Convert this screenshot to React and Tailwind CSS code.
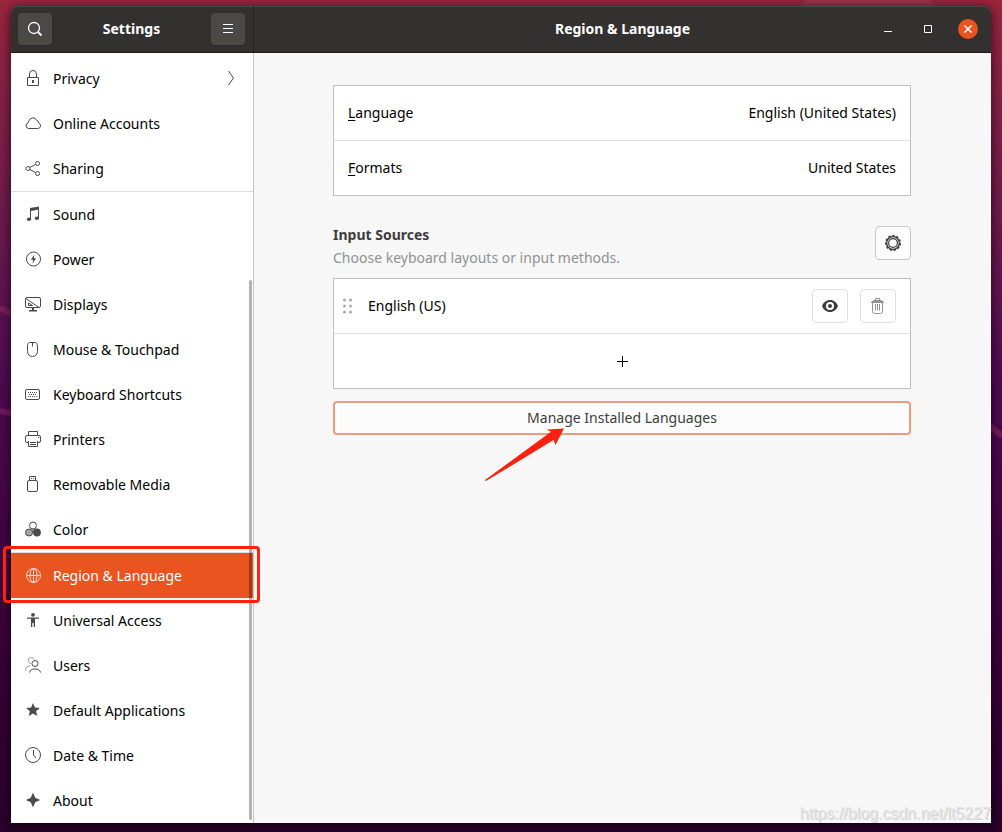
import React, { useState } from 'react';

const Icon = ({ children, size = 16, className = '' }) => (
    <svg
        width={size}
        height={size}
        viewBox={`0 0 ${size} ${size}`}
        fill="none"
        stroke="currentColor"
        strokeWidth="1"
        aria-hidden="true"
        className={`shrink-0 ${className}`}
    >
        {children}
    </svg>
);

const icons = {
    privacy: (
        <>
            <path d="M2.5 7.5h11v8h-11z" />
            <path d="M4.5 7.5V4a3.5 3.5 0 0 1 7 0v3.500" />
            <path d="M7 10h2v3H7z" fill="currentColor" stroke="none" />
        </>
    ),
    cloud: <path d="M3.600 13.500h9.200a2.800 2.800 0 0 0 1-5.400 3 3 0 0 0-2-2.700A4.200 4.200 0 0 0 3.900 6a2.500 2.500 0 0 0-.8 2 2.800 2.800 0 0 0 .5 5.500z" />,
    sharing: (
        <>
            <circle cx="3" cy="8.500" r="2" />
            <circle cx="12.500" cy="3.500" r="2" />
            <circle cx="12.500" cy="13.500" r="2" />
            <path d="M4.800 7.500l5.900-3.100M4.800 9.500l5.900 3.100" />
        </>
    ),
    sound: (
        <>
            <path d="M5 2l9-1.500v3L6 5v8H5zM13 3h1v9h-1z" fill="currentColor" stroke="none" />
            <ellipse cx="4" cy="13.300" rx="2.100" ry="1.800" fill="currentColor" stroke="none" />
            <ellipse cx="11.900" cy="12.200" rx="2.100" ry="1.800" fill="currentColor" stroke="none" />
        </>
    ),
    power: (
        <>
            <circle cx="8.500" cy="8" r="7" />
            <path d="M9.300 3.500L5.900 8.800h2.300l-.7 4 3.600-5.500H8.900z" fill="currentColor" stroke="none" />
        </>
    ),
    displays: (
        <>
            <rect x="0.500" y="1.500" width="15" height="10" rx="1.500" />
            <path d="M1 2.500l13 9M3.500 7v2.500h4z" />
            <path d="M7 12h2v2h3v1.500H4V14h3z" fill="currentColor" stroke="none" />
        </>
    ),
    mouse: (
        <>
            <path d="M2.500 6C2.500 2.500 3.500 1.500 5 1.500h5c1.500 0 2.500 1 2.500 4.500v4.500a5 5 0 0 1-10 0z" />
            <path d="M7.500 1.500v4" />
        </>
    ),
    keyboard: (
        <>
            <rect x="0.500" y="3.500" width="14" height="10" rx="1.500" />
            <path d="M3 6.500h10M4 8.500h8M3 10.500h1M5 10.500h5.500M11.500 10.500h1.500" strokeDasharray="1 1" />
        </>
    ),
    printers: (
        <>
            <path d="M3.500 4V.5h9V4M3 11.500H2A1.500 1.500 0 0 1 .5 10V6A1.500 1.500 0 0 1 2 4.500h12A1.500 1.500 0 0 1 15.500 6v4a1.500 1.500 0 0 1-1.500 1.500h-1" />
            <path d="M3.500 10v5.500h9V10M5 11.500h6M5 13.500h6M13 6.500h1" />
        </>
    ),
    media: (
        <>
            <path d="M4.500 4V.5h6V4M6 2.500h1M8 2.500h1" />
            <rect x="2.500" y="4.500" width="10" height="11" rx="1.500" />
        </>
    ),
    color: (
        <>
            <circle cx="4" cy="11.500" r="3.500" fill="#a6a6a6" />
            <circle cx="8" cy="4.500" r="3.500" fill="#fff" />
            <circle cx="12" cy="11.500" r="3.900" fill="currentColor" stroke="none" />
            <path d="M8 8v4" />
        </>
    ),
    region: (
        <>
            <circle cx="8.500" cy="8.500" r="7" />
            <ellipse cx="8.500" cy="8.500" rx="3.500" ry="7" />
            <path d="M1.500 8.500h14M8.500 1.500v14" />
        </>
    ),
    access: (
        <>
            <circle cx="8" cy="2.800" r="1.900" fill="currentColor" stroke="none" />
            <path d="M2 5.500h12v1.300h-4V15H8.700v-4H7.300v4H6V6.800H2z" fill="currentColor" stroke="none" />
        </>
    ),
    users: (
        <>
            <g opacity="0.500">
                <path d="M6 6.500A3 3 0 1 1 9 2.500M.5 13.500c0-3 1.500-4.500 4.500-4.500" />
            </g>
            <circle cx="10" cy="6.500" r="3" />
            <path d="M4.500 15.500c.5-2.500 2-3.500 5.500-3.500s5 1 5.500 3.500" />
        </>
    ),
    star: <path d="M8 1l1.900 4.600 5 .4-3.800 3.200 1.200 4.900L8 11.500l-4.300 2.600 1.200-4.900L1.100 6l5-.4z" fill="currentColor" stroke="none" />,
    clock: (
        <>
            <circle cx="8" cy="8" r="7.500" />
            <path d="M8.500 3v5l2.500 3" />
        </>
    ),
    about: <path d="M8 .8L10.300 5.700 15.200 8 10.300 10.300 8 15.200 5.700 10.300.8 8 5.700 5.700z" fill="currentColor" stroke="none" />
};

const panels = [
    { id: 'privacy', label: 'Privacy', hasSubmenu: true },
    { id: 'cloud', label: 'Online Accounts' },
    { id: 'sharing', label: 'Sharing', divider: true },
    { id: 'sound', label: 'Sound' },
    { id: 'power', label: 'Power' },
    { id: 'displays', label: 'Displays' },
    { id: 'mouse', label: 'Mouse & Touchpad' },
    { id: 'keyboard', label: 'Keyboard Shortcuts' },
    { id: 'printers', label: 'Printers' },
    { id: 'media', label: 'Removable Media' },
    { id: 'color', label: 'Color', divider: true },
    { id: 'region', label: 'Region & Language' },
    { id: 'access', label: 'Universal Access' },
    { id: 'users', label: 'Users' },
    { id: 'star', label: 'Default Applications' },
    { id: 'clock', label: 'Date & Time' },
    { id: 'about', label: 'About' }
];

const Wallpaper = () => (
    <svg
        className="absolute inset-0 h-full w-full"
        viewBox="0 0 1002 832"
        preserveAspectRatio="none"
        fill="none"
        aria-hidden="true"
    >
        <circle cx="868" cy="60" r="86" fill="#fff" opacity="0.05" />
        <path d="M0 308l12 6M0 411l12 2M990 426l12 10" stroke="#9c2a68" strokeWidth="6" opacity="0.5" />
    </svg>
);

const HeaderBar = () => (
    <header className="flex h-[47px] rounded-t-lg border-b border-[#1d1b1b] bg-[#333030] text-white inset-shadow-[0_1px_0_#4b4949]">
        <div className="flex w-[243px] shrink-0 items-center justify-between border-r border-[#242222] pr-2 pl-[7px]">
            <button aria-label="Search" className="flex h-8 w-[34px] items-center justify-center rounded-sm bg-[#4a4946] shadow-sm">
                <Icon>
                    <circle cx="7" cy="7" r="5.500" strokeWidth="1.300" />
                    <path d="M11 11l3.500 3.500" strokeWidth="1.800" />
                </Icon>
            </button>
            <h1 className="text-sm font-bold">Settings</h1>
            <button aria-label="Menu" className="flex h-8 w-[34px] items-center justify-center rounded-sm bg-[#4a4946] shadow-sm">
                <Icon>
                    <path d="M3 3.500h10M3 7.500h10M3 11.500h10" />
                </Icon>
            </button>
        </div>
        <div className="grid flex-1 grid-cols-[1fr_auto_1fr] items-center px-[13px]">
            <h2 className="col-start-2 text-sm font-bold">Region &amp; Language</h2>
            <div className="flex justify-end gap-5">
                <button aria-label="Minimize" className="flex h-5 w-5 items-center justify-center">
                    <Icon>
                        <path d="M4 10.500h8" />
                    </Icon>
                </button>
                <button aria-label="Maximize" className="flex h-5 w-5 items-center justify-center">
                    <Icon>
                        <path d="M4.500 4.500h7v7h-7z" />
                    </Icon>
                </button>
                <button aria-label="Close" className="flex h-5 w-5 items-center justify-center rounded-full bg-[#e95420]">
                    <Icon>
                        <path d="M4.500 4.500l7 7M11.500 4.500l-7 7" strokeWidth="1.500" />
                    </Icon>
                </button>
            </div>
        </div>
    </header>
);

const Sidebar = ({ active, onSelect }) => (
    <nav className="relative w-[243px] shrink-0 border-r border-[#c4c4c4] bg-white pt-[3px]">
        <ul>
            {panels.map(panel => {
                const isActive = panel.id === active;
                return (
                    <li key={panel.id} className={panel.divider ? 'border-b border-[#dedede]' : ''}>
                        <a
                            href={`#${panel.id}`}
                            onClick={() => onSelect(panel.id)}
                            className={`relative flex h-[45px] items-center gap-3 px-3.5 ${isActive ? 'bg-[#e95420] text-white' : 'text-black'}`}
                        >
                            <Icon className={isActive ? 'mb-0.5 text-[#fbd9cc]' : 'mb-0.5 text-[#4a4a4a]'}>{icons[panel.id]}</Icon>
                            <span className="flex-1">{panel.label}</span>
                            {panel.hasSubmenu && (
                                <Icon className="mb-0.5 text-[#4a4a4a]">
                                    <path d="M5.500 1l5 7-5 7" />
                                </Icon>
                            )}
                            {isActive && (
                                <span className="pointer-events-none absolute -top-[7px] -right-[7px] -bottom-[5px] -left-2 z-10 rounded-sm border-3 border-[#ff2010]" />
                            )}
                        </a>
                    </li>
                );
            })}
        </ul>
        <div className="absolute top-[227px] right-px bottom-[3px] w-[3px] rounded-full bg-black/30" />
    </nav>
);

const App = () => {
    const [active, setActive] = useState('region');

    return (
        <div
            className="relative flex min-h-screen flex-col bg-linear-to-b from-[#9a253e] via-[#500a52] via-45% to-[#2b002b] px-[11px] pt-1.5 pb-[9px] text-sm"
            style={{ fontFamily: '"Noto Sans", "Open Sans", sans-serif' }}
        >
            <Wallpaper />
            <div className="relative flex flex-1 flex-col rounded-t-lg shadow-[0_2px_10px_2px_rgba(0,0,0,0.5)]">
                <HeaderBar />
                <div className="flex flex-1">
                    <Sidebar active={active} onSelect={setActive} />
                    <main className="flex-1 bg-[#f7f7f7] pt-8 pr-20 pl-[79px]">
                        <div className="border border-[#bfbfbf] bg-white text-black">
                            <button className="flex h-[55px] w-full items-center justify-between border-b border-[#e0e0e0] px-3.5">
                                <span><span className="underline underline-offset-2">L</span>anguage</span>
                                <span>English (United States)</span>
                            </button>
                            <button className="flex h-[54px] w-full items-center justify-between px-3.5">
                                <span><span className="underline underline-offset-2">F</span>ormats</span>
                                <span>United States</span>
                            </button>
                        </div>

                        <div className="mt-7 mb-2 flex items-start justify-between">
                            <div className="-mt-px mb-px leading-[23px]">
                                <h3 className="font-bold text-[#3d3d3d]">Input Sources</h3>
                                <p className="text-[#929292]">Choose keyboard layouts or input methods.</p>
                            </div>
                            <button aria-label="Input source options" className="mt-0.5 flex h-[34px] w-9 items-center justify-center rounded border border-[#c6c6c6] bg-[#fcfcfc] text-[#3d3d3d]">
                                <Icon>
                                    <circle cx="8" cy="8" r="7.200" strokeWidth="1.600" strokeDasharray="2.500 1.610" />
                                    <circle cx="8" cy="8" r="6.300" strokeWidth="1.300" />
                                    <circle cx="8" cy="8" r="4.400" strokeWidth="1.200" />
                                </Icon>
                            </button>
                        </div>

                        <div className="border border-[#bfbfbf] bg-white text-black">
                            <div className="flex h-[55px] items-center border-b border-[#e0e0e0] pr-3.5 pl-2">
                                <Icon className="text-[#a8a8a8]">
                                    <g fill="currentColor" stroke="none">
                                        <circle cx="2.500" cy="2" r="1.500" />
                                        <circle cx="8.500" cy="2" r="1.500" />
                                        <circle cx="2.500" cy="8" r="1.500" />
                                        <circle cx="8.500" cy="8" r="1.500" />
                                        <circle cx="2.500" cy="14" r="1.500" />
                                        <circle cx="8.500" cy="14" r="1.500" />
                                    </g>
                                </Icon>
                                <span className="ml-2.5 flex-1">English (US)</span>
                                <button aria-label="Show layout" className="flex h-[34px] w-9 items-center justify-center rounded border border-[#dedede] text-[#3d3d3d]">
                                    <Icon>
                                        <path d="M8 2c4 0 6.500 2.500 8 6-1.500 3.500-4 6-8 6s-6.500-2.500-8-6c1.500-3.500 4-6 8-6z" fill="currentColor" stroke="none" />
                                        <circle cx="8" cy="8" r="4" fill="#fff" stroke="none" />
                                        <circle cx="8" cy="8" r="2" fill="currentColor" stroke="none" />
                                    </Icon>
                                </button>
                                <button aria-label="Remove" className="ml-3 flex h-[34px] w-9 items-center justify-center rounded border border-[#dedede] text-[#929292]">
                                    <Icon>
                                        <path d="M2.500 5v8.500a2 2 0 0 0 2 2h6a2 2 0 0 0 2-2V5M5.500 2V.5h4V2M5.500 6v6.500M7.500 6v6.500M9.500 6v6.500" />
                                        <path d="M1.500 4.500V4L4 2.500h7L13.500 4v.5z" fill="currentColor" />
                                    </Icon>
                                </button>
                            </div>
                            <button aria-label="Add input source" className="flex h-[54px] w-full items-center justify-center">
                                <Icon>
                                    <path d="M8.500 3v11M3 8.500h11" />
                                </Icon>
                            </button>
                        </div>

                        <div className="relative mt-3">
                            <button className="h-[34px] w-full rounded border-2 border-[#ec9b80] bg-[#fcfcfc] text-[#3d3d3d]">
                                Manage Installed Languages
                            </button>
                            <svg
                                className="pointer-events-none absolute top-[26px] left-1/2 -translate-x-[139px]"
                                width="84"
                                height="56"
                                fill="#ff2010"
                                aria-hidden="true"
                            >
                                <path d="M81 1.500L63.500 2.500l4.500 2.200L2 53l1 1 67.500-41 2 5z" />
                            </svg>
                        </div>
                    </main>
                </div>
                <span className="pointer-events-none absolute right-0 bottom-0 font-['Liberation_Sans'] text-base leading-[18px] text-[#e2e2e2] text-shadow-[1px_1px_0_#d4d4d4]">
                    https://blog.csdn.net/lt5227
                </span>
            </div>
        </div>
    );
};

export default App;
